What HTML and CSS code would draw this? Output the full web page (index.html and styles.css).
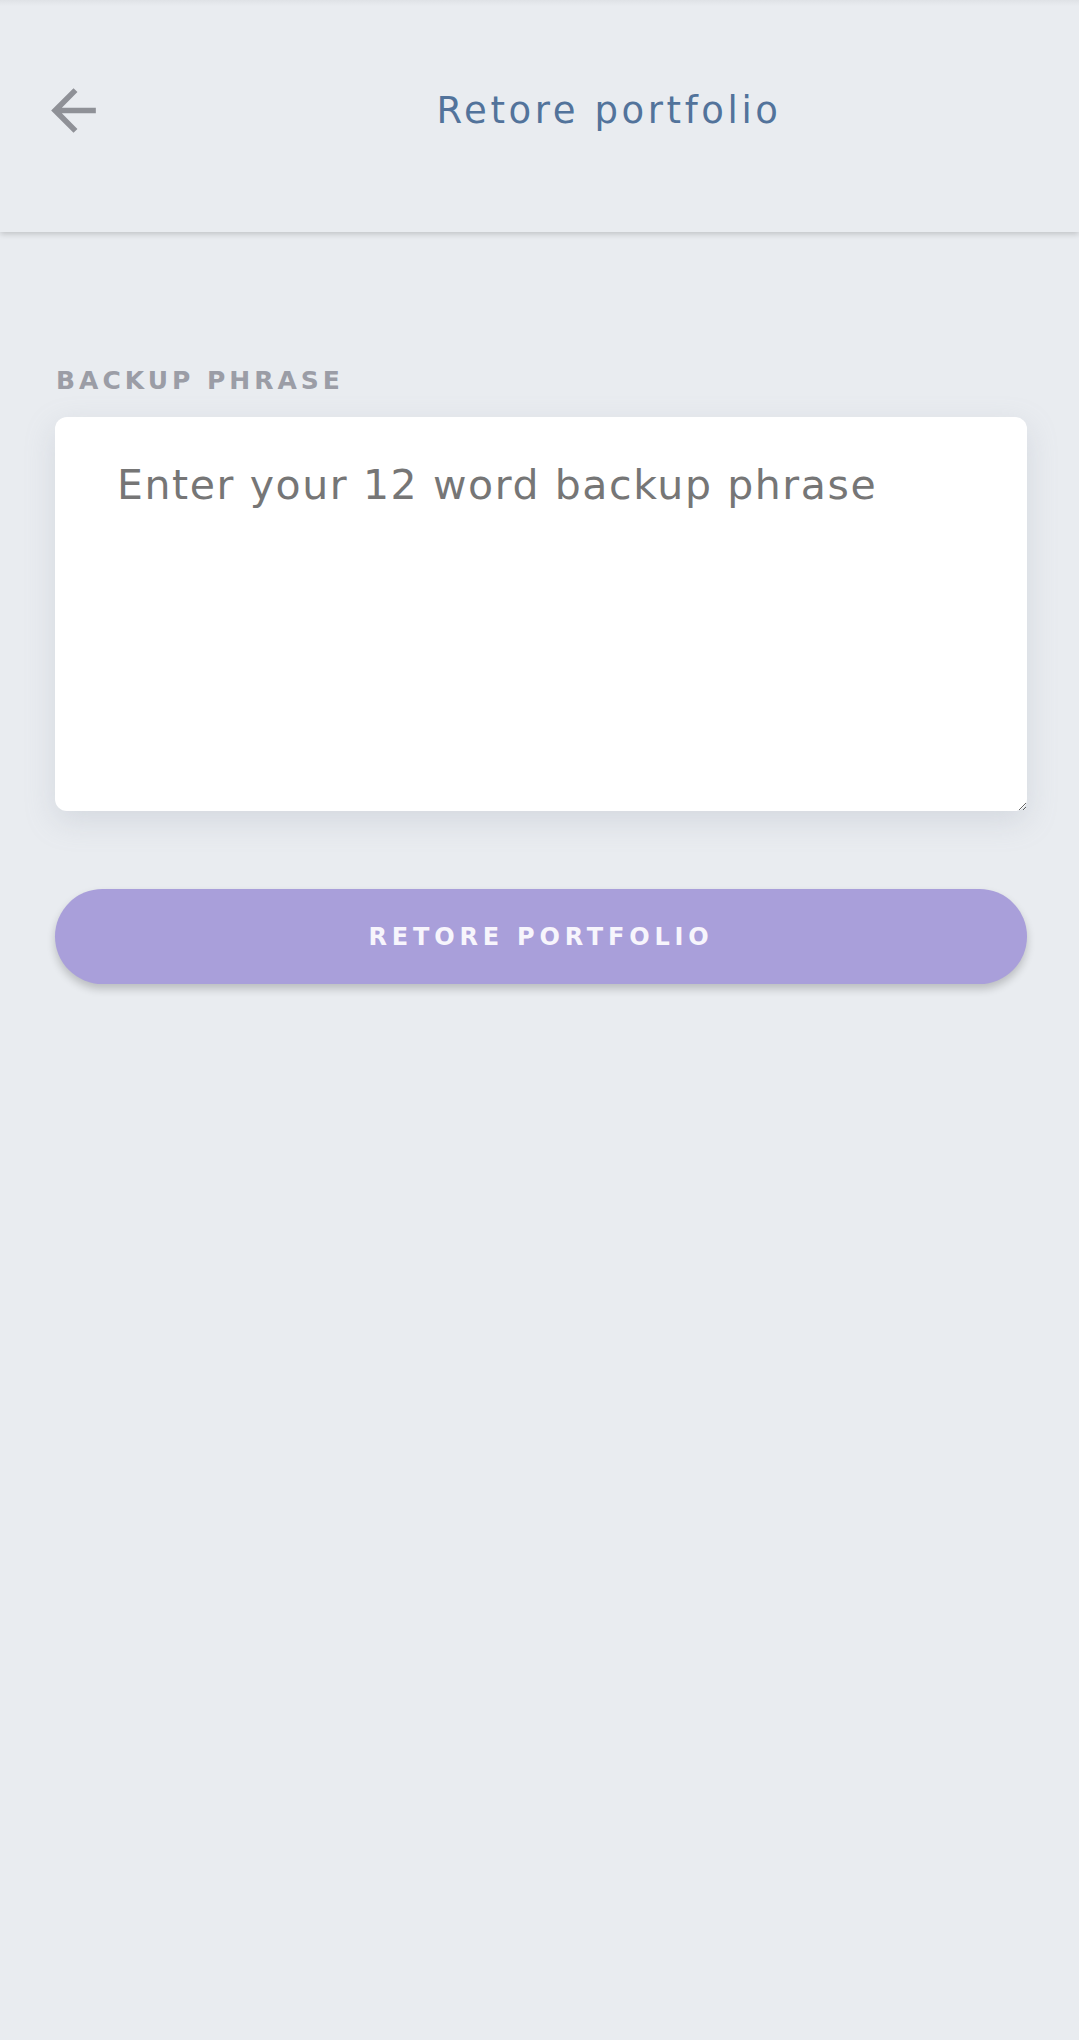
FILE: index.html
```html
<!DOCTYPE html>
<html lang="en">
<head>
<meta charset="utf-8">
<title>Retore portfolio</title>
<link rel="stylesheet" href="styles.css">
</head>
<body>
<header class="topbar">
  <button class="back" aria-label="Back">
    <svg width="67" height="67" viewBox="0 0 24 24" fill="#8f9197">
      <path d="M20 11H7.83l5.59-5.59L12 4l-8 8 8 8 1.41-1.41L7.83 13H20v-2z"/>
    </svg>
  </button>
  <h1 class="title">Retore portfolio</h1>
</header>
<main class="content">
  <label class="label" for="phrase">BACKUP PHRASE</label>
  <textarea id="phrase" class="phrase" placeholder="Enter your 12 word backup phrase"></textarea>
  <button class="restore">RETORE PORTFOLIO</button>
</main>
</body>
</html>
```
FILE: styles.css
```css
html, body {
  margin: 0;
  padding: 0;
  background: #e9ecf0;
  font-family: "DejaVu Sans", "Open Sans", sans-serif;
}
body {
  min-height: 2040px;
  background: linear-gradient(#dfe2e6, #e9ecf0 6px) no-repeat, #e9ecf0;
}
.topbar {
  height: 232px;
  display: flex;
  align-items: center;
  padding: 0 0 12px 0;
  box-sizing: border-box;
  box-shadow: 0 2px 6px rgba(0, 0, 0, 0.18);
  position: relative;
}
.back {
  width: 139px;
  height: 100px;
  display: flex;
  align-items: center;
  justify-content: flex-start;
  padding: 0 0 0 40px;
  box-sizing: border-box;
  border: 0;
  background: transparent;
  flex: none;
}
.title {
  flex: 1;
  margin: 0;
  text-align: center;
  font-weight: 400;
  font-size: 37px;
  letter-spacing: 3.6px;
  color: #52739b;
}
.content {
  display: flex;
  flex-direction: column;
  padding: 134px 52px 0 55px;
}
.label {
  font-size: 25px;
  line-height: 30px;
  font-weight: 700;
  letter-spacing: 4px;
  color: #9b9da6;
  margin-bottom: 21px;
  padding-left: 1px;
}
.phrase {
  height: 394px;
  box-sizing: border-box;
  border: 0;
  border-radius: 12px;
  background: #fff;
  padding: 40px 62px;
  font-family: "DejaVu Sans", "Open Sans", sans-serif;
  font-size: 41px;
  line-height: 56px;
  letter-spacing: 1.6px;
  color: #333;
  box-shadow: 0 10px 30px rgba(150, 160, 175, 0.25);
  outline: none;
  resize: vertical;
}
.phrase::placeholder {
  color: #767676;
}
.restore {
  margin-top: 78px;
  height: 95px;
  border: 0;
  border-radius: 48px;
  background: #a99fda;
  color: #f7f5fc;
  font-family: "DejaVu Sans", "Open Sans", sans-serif;
  font-size: 24px;
  font-weight: 700;
  letter-spacing: 4.8px;
  box-shadow: 0 5px 8px rgba(0, 0, 0, 0.2);
}
```
